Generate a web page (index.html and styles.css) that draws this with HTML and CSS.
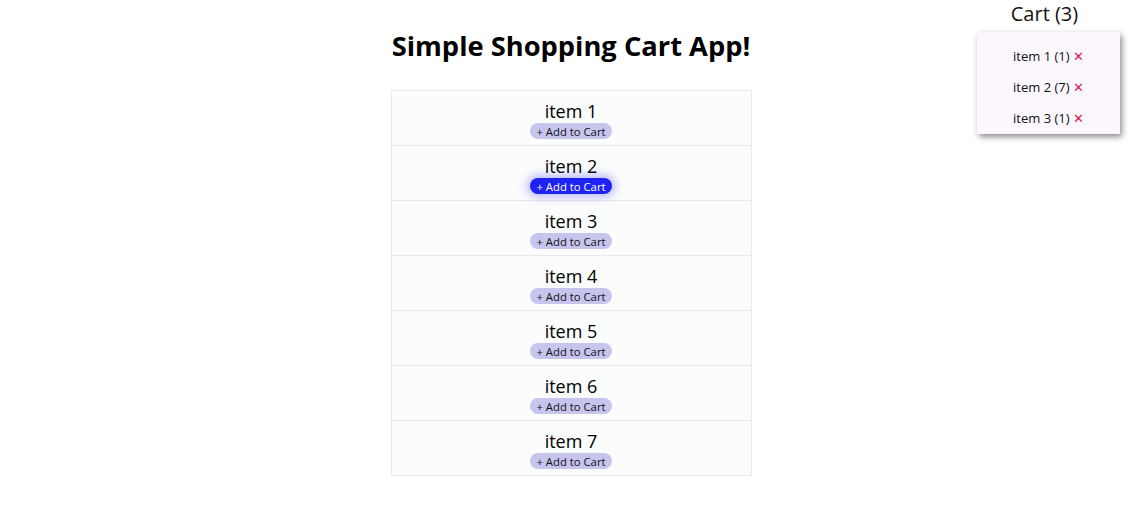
FILE: index.html
```html
<!DOCTYPE html>
<html>
<head>
<meta charset="utf-8">
<link rel="stylesheet" href="styles.css">
</head>
<body>
<div class="app">
  <main class="main">
    <h1 class="title">Simple Shopping Cart App!</h1>
    <ul class="list">
      <li class="row"><span class="name">item 1</span><button class="add">+ Add to Cart</button></li>
      <li class="row"><span class="name">item 2</span><button class="add active">+ Add to Cart</button></li>
      <li class="row"><span class="name">item 3</span><button class="add">+ Add to Cart</button></li>
      <li class="row"><span class="name">item 4</span><button class="add">+ Add to Cart</button></li>
      <li class="row"><span class="name">item 5</span><button class="add">+ Add to Cart</button></li>
      <li class="row"><span class="name">item 6</span><button class="add">+ Add to Cart</button></li>
      <li class="row"><span class="name">item 7</span><button class="add">+ Add to Cart</button></li>
    </ul>
  </main>
  <div class="cart">
    <div class="cart-title">Cart (3)</div>
    <ul class="cart-menu">
      <li class="cart-item">item 1 (1) <span class="remove">✕</span></li>
      <li class="cart-item">item 2 (7) <span class="remove">✕</span></li>
      <li class="cart-item">item 3 (1) <span class="remove">✕</span></li>
    </ul>
  </div>
</div>
</body>
</html>
```
FILE: styles.css
```css
* { box-sizing: border-box; }
html, body { margin: 0; padding: 0; background: #fff; }
body {
  font-family: "Open Sans", "Noto Sans", sans-serif;
  color: #111;
}
.app { position: relative; min-height: 513px; }
.main {
  display: flex;
  flex-direction: column;
  align-items: center;
  padding-left: 14px;
  padding-top: 28px;
}
.title {
  margin: 0;
  font-size: 27.3px;
  font-weight: 700;
  line-height: 36px;
  color: #000;
}
.list {
  list-style: none;
  margin: 26px 0 0;
  padding: 0;
  width: 361px;
  border: 1px solid #e9eaea;
  border-top: none;
}
.row {
  height: 55px;
  background: #fbfcfc;
  border-top: 1px solid #e9eaea;
  display: flex;
  flex-direction: column;
  align-items: center;
  padding-top: 9px;
}
.name {
  font-size: 18px;
  line-height: 22px;
  color: #000;
}
.add {
  font-family: inherit;
  font-size: 11.3px;
  line-height: 15px;
  height: 16px;
  padding: 0 6px;
  margin-top: 1px;
  border: none;
  border-radius: 8px;
  background: #c7c5ee;
  color: #111;
  cursor: pointer;
}
.add.active {
  background: #1f22f4;
  color: #fff;
  box-shadow: 0 0 8px 3px rgba(60, 60, 240, 0.35);
}
.cart {
  position: absolute;
  top: 0;
  right: 8px;
  width: 143px;
  display: flex;
  flex-direction: column;
  align-items: center;
}
.cart-title {
  font-size: 20px;
  line-height: 28px;
  margin-left: -8px;
  color: #111;
}
.cart-menu {
  list-style: none;
  margin: 4px 0 0;
  padding: 9px 0 0;
  width: 143px;
  background: #fcf7ff;
  box-shadow: 2px 3px 6px rgba(0, 0, 0, 0.45);
}
.cart-item {
  font-size: 13px;
  line-height: 31px;
  text-align: center;
  color: #111;
}
.remove {
  color: #e0184a;
  font-size: 13px;
}
```
